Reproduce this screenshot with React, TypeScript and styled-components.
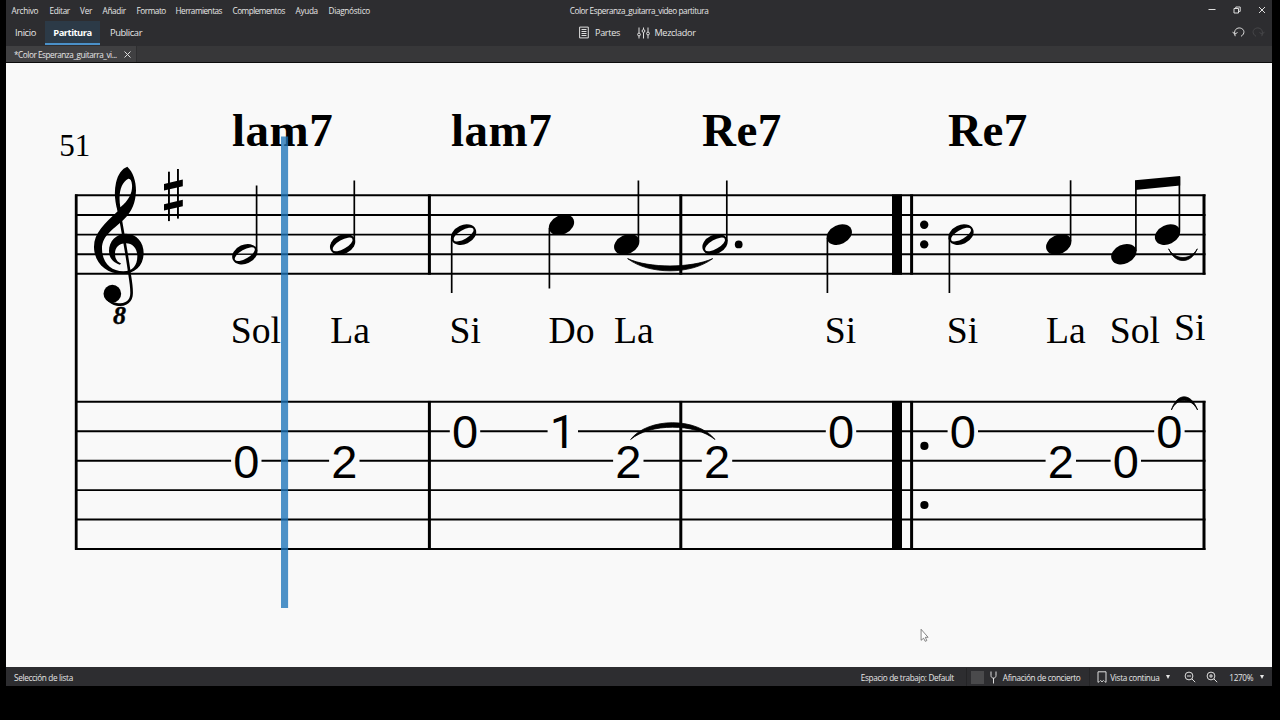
import React from "react";
import styled, { createGlobalStyle } from "styled-components";

const Global = createGlobalStyle`
  * { box-sizing: border-box; }
  html, body { margin: 0; background: #000; }
  body { width: 1280px; height: 720px; overflow: hidden; font-family: "Open Sans", "Noto Sans", sans-serif; }
`;

const Screen = styled.div`
  width: 1280px;
  height: 720px;
  padding: 0 8px 34px 6px;
  background: #000;
  color: #e6e6e6;
`;
const Window = styled.div`
  display: flex;
  flex-direction: column;
  height: 686px;
  background: #2d2d30;
`;
const MenuBar = styled.header`
  display: grid;
  grid-template-columns: 1fr auto 1fr;
  align-items: center;
  height: 21px;
  font-size: 8.2px;
  line-height: 20px;
`;
const Menus = styled.nav`
  display: flex;
  padding-left: 5.5px;
`;
const MenuItem = styled.span<{ $w: number; $ls: number }>`
  width: ${(p) => p.$w}px;
  white-space: nowrap;
  letter-spacing: ${(p) => p.$ls}px;
`;
const Title = styled.div`
  letter-spacing: -0.43px;
  white-space: nowrap;
`;
const WindowButtons = styled.div`
  display: flex;
  justify-content: flex-end;
  gap: 15px;
  padding: 0 5px 1px 0;
`;
const ToolRow = styled.div`
  display: grid;
  grid-template-columns: 1fr auto 1fr;
  height: 25px;
  font-size: 9.4px;
`;
const Pages = styled.nav`
  display: flex;
`;
const PageTab = styled.span<{ $w: number; $active?: boolean }>`
  width: ${(p) => p.$w}px;
  height: 24px;
  line-height: 23px;
  text-align: center;
  white-space: nowrap;
  font-weight: ${(p) => (p.$active ? 700 : 400)};
  letter-spacing: ${(p) => (p.$active ? -0.5 : -0.4)}px;
  color: ${(p) => (p.$active ? "#fff" : "#e6e6e6")};
  background: ${(p) => (p.$active ? "#2c3a47" : "transparent")};
  border-bottom: 2px solid ${(p) => (p.$active ? "#4a90c9" : "transparent")};
`;
const Tools = styled.div`
  display: flex;
  align-items: center;
  height: 23px;
  font-size: 9.1px;
  letter-spacing: -0.33px;
`;
const Tool = styled.span<{ $w: number; $gap: number }>`
  display: flex;
  align-items: center;
  gap: ${(p) => p.$gap}px;
  width: ${(p) => p.$w}px;
  white-space: nowrap;
`;
const History = styled.div`
  display: flex;
  justify-content: flex-end;
  align-items: center;
  gap: 7px;
  height: 22px;
  padding-right: 7px;
`;
const TabStrip = styled.div`
  display: flex;
  height: 17px;
  background: #373739;
  border-bottom: 1px solid #0c0c0c;
`;
const FileTab = styled.div`
  display: flex;
  align-items: center;
  justify-content: space-between;
  width: 131px;
  padding: 0 5px 0 8px;
  background: #404042;
  border-right: 1px solid #2e2e30;
  font-size: 8.2px;
  letter-spacing: -0.44px;
  white-space: nowrap;
`;
const TabClose = styled.svg`
  display: block;
  fill: none;
  stroke: #dedede;
`;
const Canvas = styled.main`
  height: 604px;
  background: #f9f9f9;
`;
const StatusBar = styled.footer`
  display: flex;
  justify-content: space-between;
  align-items: center;
  height: 19px;
  padding: 1px 0 0 8px;
  font-size: 8.2px;
  letter-spacing: -0.34px;
  white-space: nowrap;
`;
const StatusRight = styled.div`
  display: flex;
  align-items: center;
  height: 18px;
`;
const StatusCell = styled.div<{ $w: number; $gap?: number; $pl?: number; $line?: boolean }>`
  display: flex;
  align-items: center;
  gap: ${(p) => p.$gap ?? 0}px;
  width: ${(p) => p.$w}px;
  height: 18px;
  padding-left: ${(p) => p.$pl ?? 0}px;
  border-right: 1px solid ${(p) => (p.$line ? "#242426" : "transparent")};
`;
const Swatch = styled.span`
  width: 13px;
  height: 13px;
  background: #4a4a4c;
`;
const Fixed = styled.span<{ $w: number }>`
  width: ${(p) => p.$w}px;
`;
const Caret = styled.span`
  border: 2px solid transparent;
  border-top: 4px solid #e6e6e6;
  border-bottom: 0;
`;
const Icon = styled.svg`
  display: block;
  flex: none;
  fill: none;
  stroke: #dedede;
  stroke-width: 1;
`;
const ScoreSvg = styled.svg`
  display: block;
  fill: #000;
`;
const Chord = styled.text`
  font: 700 47px "Liberation Serif", serif;
  letter-spacing: 0.5px;
`;
const Lyric = styled.text`
  font: 37.7px "Liberation Serif", serif;
`;
const BarNumber = styled.text`
  font: 31px "Liberation Serif", serif;
`;
const OctaveMark = styled.text`
  font: italic 700 26px "Liberation Serif", serif;
  stroke: #000;
  stroke-width: 0.4px;
`;
const Fret = styled.text<{ $one?: boolean }>`
  font: ${(p) => (p.$one ? '46.5px Roboto' : '47px "Liberation Sans"')}, sans-serif;
  text-anchor: middle;
`;

const menus: [string, number, number][] = [
  ["Archivo", 38, -0.25], ["Editar", 30.5, -0.35], ["Ver", 22.5, -0.2], ["Añadir", 34, -0.3],
  ["Formato", 39, -0.45], ["Herramientas", 57, -0.5], ["Complementos", 63, -0.5], ["Ayuda", 33, -0.3],
  ["Diagnóstico", 45, -0.3],
];

const staffLines = [195.3, 215, 234.6, 254.2, 273.8];
const tabLines = [401.8, 431.2, 460.7, 490.1, 519.5, 549];
const barlines: [number, number][] = [[429.4, 3], [680.8, 3], [897, 10], [911.6, 3], [1204, 3]];

type Note = { x: number; y: number; half?: boolean; stem: [number, number] };
const notes: Note[] = [
  { x: 244.8, y: 254.2, half: true, stem: [256.6, 185.5] },
  { x: 342.6, y: 244.4, half: true, stem: [354.3, 180.5] },
  { x: 463.6, y: 234.6, half: true, stem: [451.7, 293] },
  { x: 561.5, y: 224.8, stem: [549.4, 288.5] },
  { x: 626.7, y: 244.4, stem: [638.4, 180.5] },
  { x: 715, y: 244.4, half: true, stem: [726.8, 180.5] },
  { x: 839.3, y: 234.6, stem: [827.4, 293] },
  { x: 961, y: 234.6, half: true, stem: [949.4, 293] },
  { x: 1058.7, y: 244.4, stem: [1070.6, 180.3] },
  { x: 1123.8, y: 254.2, stem: [1135.9, 181] },
  { x: 1167.5, y: 234.6, stem: [1179.4, 177] },
];

const chords: [string, number][] = [["lam7", 232], ["lam7", 451], ["Re7", 702], ["Re7", 948]];
const lyrics: [string, number, number][] = [
  ["Sol", 230.7, 342.5], ["La", 330.2, 342.5], ["Si", 449.5, 342.5], ["Do", 548.5, 342.5],
  ["La", 613.9, 342.5], ["Si", 824.7, 342.5], ["Si", 946.7, 342.5], ["La", 1046, 342.5],
  ["Sol", 1109.7, 342.5], ["Si", 1174, 340],
];
const frets: [string, number, number][] = [
  ["0", 246.3, 2], ["2", 344.3, 2], ["0", 465, 1], ["1", 562.8, 1], ["2", 628.3, 2], ["2", 717, 2],
  ["0", 841, 1], ["0", 962.8, 1], ["2", 1060.8, 2], ["0", 1125.8, 2], ["0", 1169.4, 1],
];

function Clef() {
  return (
    <g transform="translate(50 100) scale(.33333)">
      <path
        fillRule="evenodd"
        d="M210 494C190 488 177 474 177 453C177 424 198 401 228 401C260 401 281 427 281 459C281 497 254 522 217 522C166 522 132 486 132 440C132 400 164 370 203 334C194 303 192 275 198 248C204 222 216 206 232 200C249 216 258 242 258 272C257 308 245 334 225 355C194 387 156 404 156 446C156 487 183 514 220 514C248 514 262 497 262 469C262 444 246 430 228 430C206 430 195 444 195 461C195 477 202 486 213 490ZM211 322C238 300 248 276 246 254C245 242 241 235 235 236C213 247 204 280 211 322Z"
      />
      <path
        d="M206 325C216 384 229 450 239 524C244 554 247 572 244 588C240 609 220 617 200 613C188 611 180 605 174 598"
        fill="none"
        stroke="#000"
        strokeWidth="8"
      />
      <circle cx="187" cy="581" r="26.5" />
    </g>
  );
}

function Score() {
  return (
    <ScoreSvg width="1266" height="604" viewBox="6 63 1266 604">
      <g stroke="#000" strokeWidth="1.9">
        {[...staffLines, ...tabLines].map((y) => (
          <line key={y} x1="75" x2="1205.5" y1={y} y2={y} />
        ))}
      </g>
      <rect x="74.8" y="194.4" width="2.8" height="355.5" />
      {barlines.map(([x, w]) => (
        <g key={x}>
          <rect x={x - w / 2} y="194.4" width={w} height="80.3" />
          <rect x={x - w / 2} y="400.9" width={w} height="149" />
        </g>
      ))}
      <BarNumber x="59.2" y="156.3">51</BarNumber>
      {chords.map(([t, x]) => <Chord key={x} x={x} y="146.4">{t}</Chord>)}
      <Clef />
      <OctaveMark x="113" y="324.3">8</OctaveMark>
      <g>
        <rect x="168" y="171.7" width="1.9" height="49.4" />
        <rect x="177" y="169" width="1.9" height="49.6" />
        <path d="M164 184L182.8 179.6V186.2L164 190.6ZM164 204.2L182.8 199.8V206.2L164 210.6Z" />
      </g>
      {notes.map((n) => (
        <g key={n.x}>
          <line x1={n.stem[0]} x2={n.stem[0]} y1={n.y + (n.stem[1] < n.y ? -3 : 3)} y2={n.stem[1]} stroke="#000" strokeWidth="1.7" />
          <g transform={`translate(${n.x} ${n.y}) rotate(-25)`}>
            <ellipse rx="13.2" ry="9.5" />
            {n.half && <ellipse rx="11.3" ry="4.5" fill="#f9f9f9" transform="rotate(-5)" />}
          </g>
          {n.half && (n.y === 254.2 || n.y === 234.6) && (
            <line x1={n.x - 11} x2={n.x + 11} y1={n.y} y2={n.y} stroke="#000" strokeWidth="1.4" />
          )}
        </g>
      ))}
      <path d="M1135 180.2L1180.2 176V185.6L1135 190Z" />
      <circle cx="738.7" cy="244.4" r="3.9" />
      <circle cx="924.2" cy="224.8" r="4.2" />
      <circle cx="924.2" cy="244.4" r="4.2" />
      <circle cx="924.4" cy="445.9" r="4.1" />
      <circle cx="924.4" cy="505" r="4.1" />
      {lyrics.map(([t, x, y]) => <Lyric key={x} x={x} y={y}>{t}</Lyric>)}
      {frets.map(([t, x, line]) => (
        <g key={x}>
          <rect x={x - 15.2} y={tabLines[line] - 16} width="30.4" height="32" fill="#f9f9f9" />
          <Fret $one={t === "1"} x={x} y={tabLines[line] + 16.8}>{t}</Fret>
        </g>
      ))}
      <g stroke="#000" strokeWidth=".8">
        <path d="M627.6 258.6C649 274.9 691 274.9 712.7 258.6C691 268.4 649 268.4 627.6 258.6Z" />
        <path d="M1168.6 248.8C1175 264.5 1191 264.5 1197.3 248.8C1191 260.4 1175 260.4 1168.6 248.8Z" />
        <path d="M630.6 439.5C648 417.1 697 417.1 715 439.5C695 423.1 650 423.1 630.6 439.5Z" />
        <path d="M1171.4 410C1177 392.4 1191 392.4 1197.6 410C1191 397.2 1177 397.2 1171.4 410Z" />
      </g>
      <rect x="281" y="136.5" width="7.1" height="471.5" fill="#1c73b8" fillOpacity=".78" />
      <path d="M921.1 629.3V640.3L923.6 638.2L925.2 641.3L926.8 640.6L925.3 637.3H928.1Z" fill="#fff" stroke="#555" strokeWidth=".7" />
    </ScoreSvg>
  );
}

export default function App() {
  return (
    <Screen>
      <Global />
      <Window>
        <MenuBar>
          <Menus>
            {menus.map(([t, w, ls]) => <MenuItem key={t} $w={w} $ls={ls}>{t}</MenuItem>)}
          </Menus>
          <Title>Color Esperanza_guitarra_video partitura</Title>
          <WindowButtons>
            <Icon width="10" height="10"><path d="M1.5 4.5H8.5" /></Icon>
            <Icon width="10" height="10"><path d="M2 3.5H6.5V8H2ZM3.8 3.5V2H8.2V6.4H6.5" /></Icon>
            <Icon width="10" height="10"><path d="M2 2L8 8M8 2L2 8" /></Icon>
          </WindowButtons>
        </MenuBar>
        <ToolRow>
          <Pages>
            <PageTab $w={39}>Inicio</PageTab>
            <PageTab $w={55} $active>Partitura</PageTab>
            <PageTab $w={52}>Publicar</PageTab>
          </Pages>
          <Tools>
            <Tool $w={58} $gap={6}>
              <Icon width="10" height="13"><path d="M.6 1.1H9.3V11.9H.6ZM2.5 3.5H7.5M2.5 5.5H7.5M2.5 7.5H7.5M2.5 9.5H7.5" /></Icon>
              Partes
            </Tool>
            <Tool $w={62} $gap={4.5}>
              <Icon width="13" height="12">
                <path d="M2 .5V6M2 9V11.5M6.5 .5V2.5M6.5 5.5V11.5M11 .5V5M11 8V11.5" />
                <circle cx="2" cy="7.5" r="1.4" /><circle cx="6.5" cy="4" r="1.4" /><circle cx="11" cy="6.5" r="1.4" />
              </Icon>
              Mezclador
            </Tool>
          </Tools>
          <History>
            <Icon width="13" height="12"><path d="M3.2 9.7C.9 2.9 5.5 1 8.2 1.5C12.6 2.4 13.4 7.3 9 9.8M.5 5.3L2.7 7.7L5.5 6" transform="translate(0 .5)" /></Icon>
            <Icon width="13" height="12" opacity=".14"><path d="M9.8 9.7C12.1 2.9 7.5 1 4.8 1.5C.4 2.4 -.4 7.3 4 9.8M12.5 5.3L10.3 7.7L7.5 6" transform="translate(0 .5)" /></Icon>
          </History>
        </ToolRow>
        <TabStrip>
          <FileTab>
            <span>*Color Esperanza_guitarra_vi...</span>
            <TabClose width="7" height="7"><path d="M.5 .5L6.5 6.5M6.5 .5L.5 6.5" /></TabClose>
          </FileTab>
        </TabStrip>
        <Canvas><Score /></Canvas>
        <StatusBar>
          <span>Selección de lista</span>
          <StatusRight>
            <StatusCell $w={106} $line>Espacio de trabajo: Default</StatusCell>
            <StatusCell $w={123} $pl={4} $gap={6} $line>
              <Swatch />
              <Icon width="7" height="13"><path d="M1 .5V4.5C1 8 6 8 6 4.5V.5M3.5 7V12.5" /></Icon>
              <span>Afinación de concierto</span>
            </StatusCell>
            <StatusCell $w={94} $pl={7} $gap={3.5}>
              <Icon width="10" height="12"><path d="M1 11.3V.8H9V11.3L7.5 10.5M1 11.3L2.5 10.5M3.3 9.3L5 10.8L6.7 9.3" /></Icon>
              <Fixed $w={52}>Vista continua</Fixed>
              <Caret />
            </StatusCell>
            <StatusCell $w={22.5}>
              <Icon width="12" height="12"><circle cx="5" cy="5" r="3.9" /><path d="M7.9 7.9L11.2 11.2M3 5H7" /></Icon>
            </StatusCell>
            <StatusCell $w={23}>
              <Icon width="12" height="12"><circle cx="5" cy="5" r="3.9" /><path d="M7.9 7.9L11.2 11.2M3 5H7M5 3V7" /></Icon>
            </StatusCell>
            <StatusCell $w={42.7}>
              <Fixed $w={30.5}>1270%</Fixed>
              <Caret />
            </StatusCell>
          </StatusRight>
        </StatusBar>
      </Window>
    </Screen>
  );
}
